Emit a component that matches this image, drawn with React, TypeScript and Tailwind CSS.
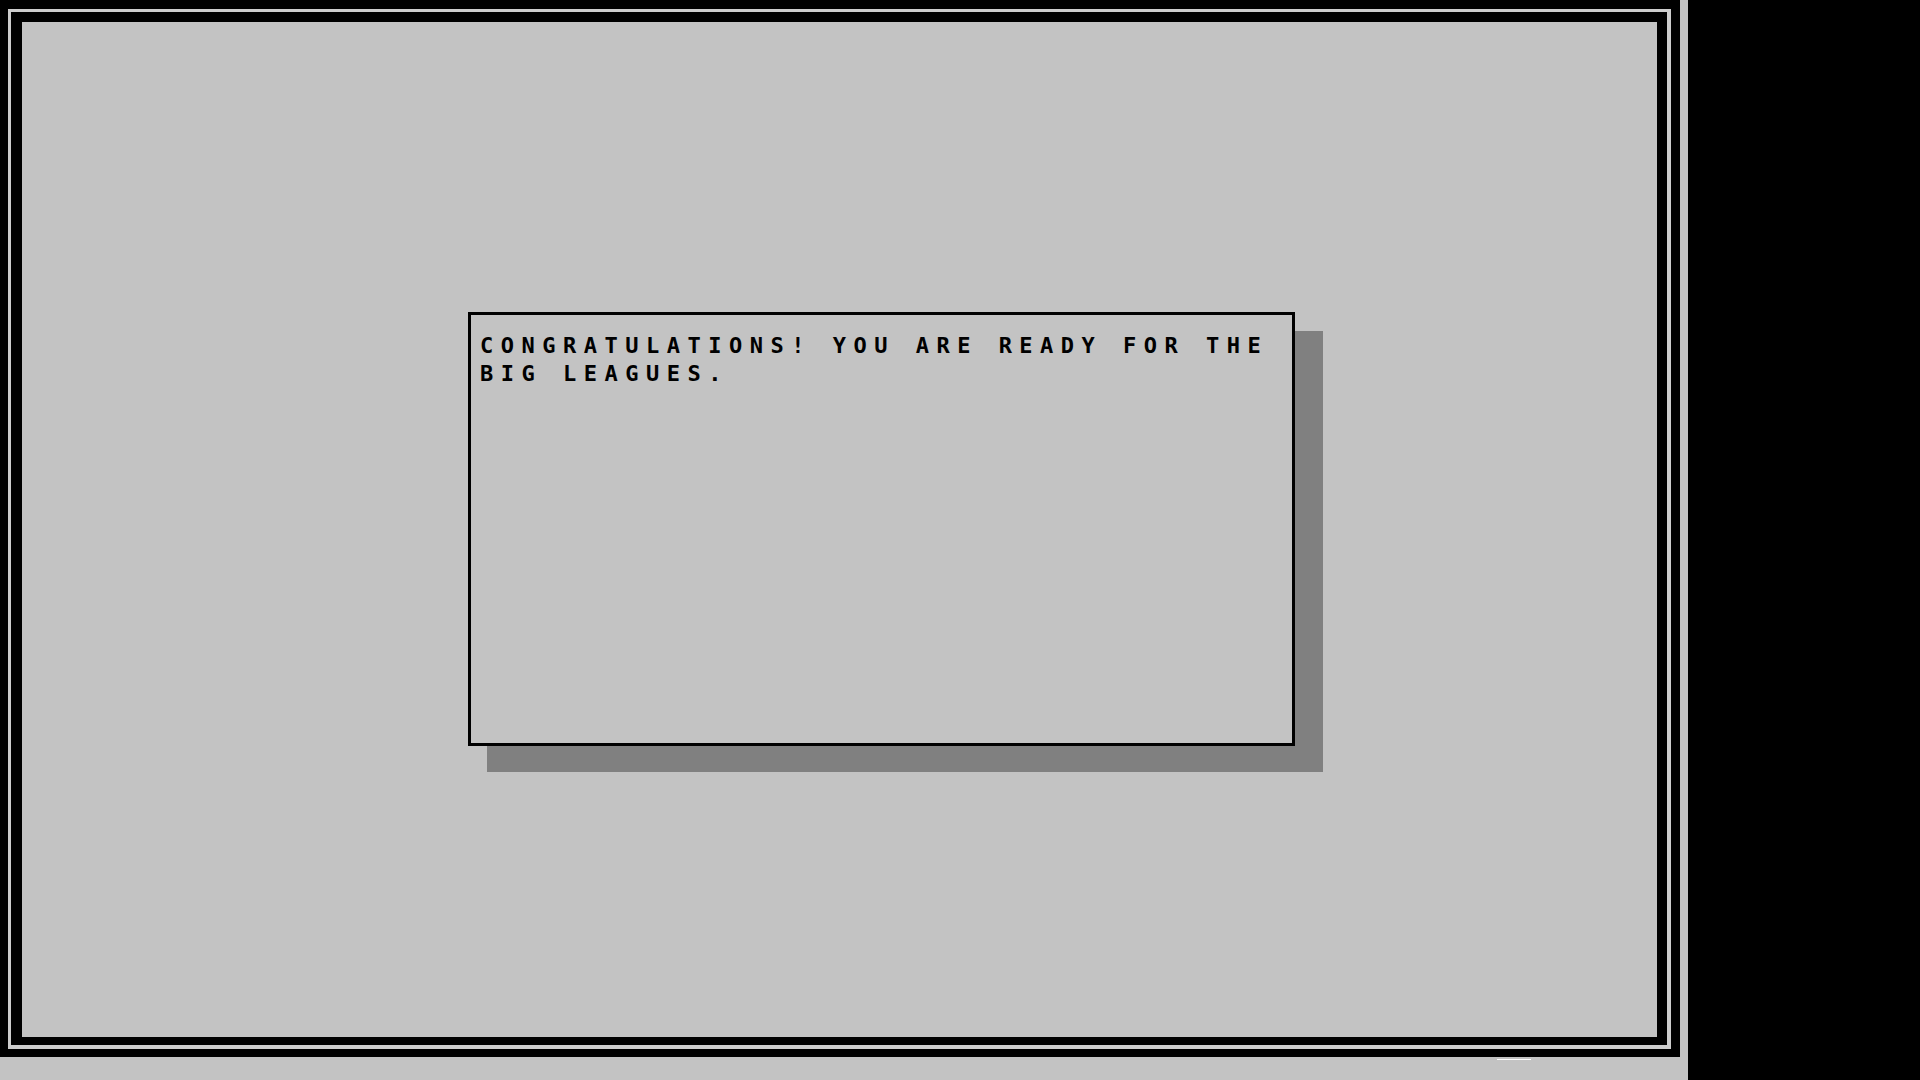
import React from 'react';

// Retro message dialog shown on the game screen
const MessageBox = ({ text }: { text: string }) => {
  return (
    <div className="relative w-[827px] h-[434px]">
      {/* drop shadow */}
      <div className="absolute left-[19px] top-[19px] w-[836px] h-[441px] bg-[#808080]" />
      <div className="relative h-full w-full border-[3px] border-black bg-[#c3c3c3] pl-[9px] pr-[8px] pt-[17px]">
        <p className="font-['DejaVu_Sans_Mono',monospace] text-[22px] font-bold uppercase leading-[28px] tracking-[7.5px] text-black">
          {text}
        </p>
      </div>
    </div>
  );
};

export default function App() {
  return (
    <div className="flex h-[1080px] w-[1920px] bg-black">
      {/* Game screen */}
      <div className="flex w-[1688px] flex-col bg-[#c3c3c3]">
        {/* Double frame */}
        <div className="h-[1057px] w-[1680px] bg-black pl-[8px] pt-[9px] pr-[9px] pb-[8px]">
          <div className="h-full w-full border-[3px] border-r-4 border-b-4 border-[#cdcdcd] bg-black pl-[11px] pt-[10px] pr-[10px] pb-[8px]">
            <div className="h-full w-full bg-[#c3c3c3] pl-[446px] pt-[290px]">
              <MessageBox text="Congratulations! You are ready for the big leagues." />
            </div>
          </div>
        </div>
        <div className="ml-[1497px] mt-[2px] h-px w-[34px] bg-white" />
      </div>
    </div>
  );
}
